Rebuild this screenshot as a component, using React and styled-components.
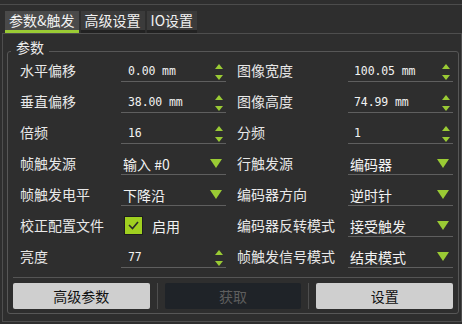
import React from 'react'
import styled, { createGlobalStyle } from 'styled-components'

const GREEN = '#9acb34'

const GlobalStyle = createGlobalStyle`
  html, body {
    margin: 0;
    padding: 0;
    background: #2e2e2e;
  }
  body {
    font-family: "Noto Sans CJK SC", "Noto Sans", sans-serif;
  }
  * { box-sizing: border-box; }
`

const Window = styled.div`
  width: 462px;
  height: 324px;
  background: #2e2e2e;
  color: #e6e6e6;
  font-size: 14px;
  overflow: hidden;
`

const TopRule = styled.div`
  height: 5px;
  border-bottom: 1px solid #4c4c4c;
`

const TabBar = styled.div`
  display: flex;
  gap: 2px;
  margin: 6px 0 0 5px;
`

const Tab = styled.div`
  height: 22px;
  line-height: 19px;
  padding: 0 4px;
  background: ${({ $active }) => ($active ? '#4a4a4a' : '#3b3b3b')};
  border-bottom: 3px solid ${({ $active }) => ($active ? GREEN : '#222')};
  color: #f2f2f2;
  white-space: nowrap;
`

const Pane = styled.div`
  margin-left: 2px;
  width: 460px;
  height: 289px;
  border: 1px solid #4e4e4e;
  padding: 17px 2px 0 4px;
`

const Group = styled.div`
  position: relative;
  border: 1px solid #575757;
  border-radius: 3px;
  padding: 0 5px 4px 5px;
`

const GroupTitle = styled.div`
  position: absolute;
  left: 3px;
  top: -15px;
  padding: 0 5px;
  line-height: 20px;
  background: #2e2e2e;
  color: #ececec;
`

const Form = styled.div`
  margin-top: -1px;
`

const Row = styled.div`
  display: grid;
  grid-template-columns: 206px 216px;
  column-gap: 11px;
  height: 31px;
  padding-left: 7px;
`

const Item = styled.div`
  display: grid;
  grid-template-columns: ${({ $labelWidth }) => $labelWidth}px 105px;
  align-items: end;
`

const Label = styled.div`
  height: 22px;
  line-height: 21px;
  white-space: nowrap;
  color: #e8e8e8;
`

const Field = styled.div`
  height: 22px;
  display: flex;
  align-items: center;
  border-bottom: 1px solid ${({ $plain }) => ($plain ? 'transparent' : '#5f5f5f')};
  padding-left: ${({ $pad }) => $pad}px;
  color: #f2f2f2;
  white-space: nowrap;
`

const Number = styled.span`
  flex: 1;
  font-family: "DejaVu Sans Mono", "Liberation Mono", monospace;
  font-size: 11.5px;
  letter-spacing: -0.1px;
`

const ComboText = styled.span`
  flex: 1;
`

const SpinArrows = styled.svg`
  margin: 2px 3px 0 0;
`

const ComboArrow = styled.svg`
  margin-right: 4px;
`

const Check = styled.div`
  width: 19px;
  height: 19px;
  margin-left: 3px;
  margin-bottom: 1px;
  background: #a0d020;
  border: 1px solid #1e1e1e;
  display: flex;
  align-items: center;
  justify-content: center;
`

const CheckText = styled.span`
  margin-left: 9px;
`

const Separator = styled.div`
  margin-top: 9px;
  border-top: 1px solid #555;
`

const ButtonRow = styled.div`
  display: flex;
  gap: 7px;
  margin-top: 5px;
`

const Button = styled.button`
  flex: 1;
  height: 26px;
  border: none;
  border-radius: 2px;
  padding: 0;
  background: ${({ disabled }) => (disabled ? '#1f2328' : '#cfcfcf')};
  color: ${({ disabled }) => (disabled ? '#5e5e5e' : '#111')};
  font-family: "Noto Sans CJK SC", sans-serif;
  font-size: 14px;
`

const Divider = styled.div`
  width: 1px;
  background: #4e4e4e;
`

const Spin = ({ value, pad = 7 }) => (
  <Field $pad={pad}>
    <Number>{value}</Number>
    <SpinArrows width="8" height="16" viewBox="0 0 8 16">
      <polygon points="4,0 8,5 0,5" fill={GREEN} />
      <polygon points="0,11 8,11 4,16" fill={GREEN} />
    </SpinArrows>
  </Field>
)

const Combo = ({ value }) => (
  <Field $pad={2}>
    <ComboText>{value}</ComboText>
    <ComboArrow width="12" height="9" viewBox="0 0 12 9">
      <polygon points="0,0 12,0 6,9" fill={GREEN} />
    </ComboArrow>
  </Field>
)

const CheckField = ({ text }) => (
  <Field $plain $pad={0}>
    <Check>
      <svg width="13" height="11" viewBox="0 0 13 11">
        <polyline points="2,5 5.5,8.5 11,2" fill="none" stroke="#2a2a2a" strokeWidth="1.6" />
      </svg>
    </Check>
    <CheckText>{text}</CheckText>
  </Field>
)

const rows = [
  [['水平偏移', <Spin value="0.00 mm" />], ['图像宽度', <Spin value="100.05 mm" pad={6} />]],
  [['垂直偏移', <Spin value="38.00 mm" />], ['图像高度', <Spin value="74.99 mm" pad={6} />]],
  [['倍频', <Spin value="16" />], ['分频', <Spin value="1" pad={6} />]],
  [['帧触发源', <Combo value="输入 #0" />], ['行触发源', <Combo value="编码器" />]],
  [['帧触发电平', <Combo value="下降沿" />], ['编码器方向', <Combo value="逆时针" />]],
  [['校正配置文件', <CheckField text="启用" />], ['编码器反转模式', <Combo value="接受触发" />]],
  [['亮度', <Spin value="77" />], ['帧触发信号模式', <Combo value="结束模式" />]],
]

export default function App() {
  return (
    <Window>
      <GlobalStyle />
      <TopRule />
      <TabBar>
        <Tab $active>参数&amp;触发</Tab>
        <Tab>高级设置</Tab>
        <Tab>IO设置</Tab>
      </TabBar>
      <Pane>
        <Group>
          <GroupTitle>参数</GroupTitle>
          <Form>
            {rows.map((row, i) => (
              <Row key={i}>
                <Item $labelWidth={101}>
                  <Label>{row[0][0]}</Label>
                  {row[0][1]}
                </Item>
                <Item $labelWidth={111}>
                  <Label>{row[1][0]}</Label>
                  {row[1][1]}
                </Item>
              </Row>
            ))}
          </Form>
          <Separator />
          <ButtonRow>
            <Button>高级参数</Button>
            <Divider />
            <Button disabled>获取</Button>
            <Divider />
            <Button>设置</Button>
          </ButtonRow>
        </Group>
      </Pane>
    </Window>
  )
}
